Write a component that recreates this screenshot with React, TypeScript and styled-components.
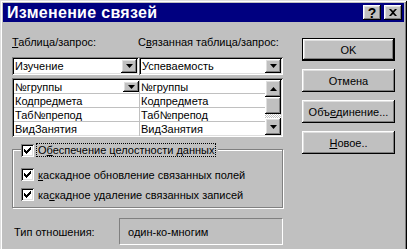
import * as React from 'react'
import styled, { createGlobalStyle, css } from 'styled-components'

const GlobalStyle = createGlobalStyle`
  html, body {
    margin: 0;
    padding: 0;
    background: #c0c0c0;
    overflow: hidden;
  }
  body {
    font-family: "Liberation Sans", Arial, sans-serif;
    font-size: 11px;
    color: #000;
  }
`

const raised = css`
  background: #c0c0c0;
  box-shadow: inset -1px -1px #000, inset 1px 1px #fff, inset -2px -2px #808080,
    inset 2px 2px #dfdfdf;
`

const sunken = css`
  background: #fff;
  box-shadow: inset 1px 1px #808080, inset -1px -1px #fff, inset 2px 2px #000,
    inset -2px -2px #dfdfdf;
`

// window runs past the bottom of the shot, so no bottom edge
const Window = styled.div`
  width: 407px;
  height: 249px;
  box-sizing: border-box;
  padding: 3px 3px 0;
  background: #c0c0c0;
  box-shadow: inset 1px 1px #dfdfdf, inset -1px 0 #000, inset 2px 2px #fff,
    inset -2px 0 #808080;
  overflow: hidden;
`

const TitleBar = styled.div`
  height: 19px;
  background: #000080;
  display: flex;
  align-items: center;
  padding: 0 2px 0 4px;
  color: #fff;
`

const Title = styled.div`
  flex: 1;
  font-weight: bold;
  font-size: 16px;
  letter-spacing: 0.3px;
  white-space: nowrap;
`

const CaptionButton = styled.div`
  ${raised};
  width: 18px;
  height: 15px;
  margin-left: 3px;
  display: flex;
  align-items: center;
  justify-content: center;
  color: #000;
  font-weight: bold;
  font-size: 14px;
  line-height: 1;
`

const Body = styled.div`
  display: flex;
  padding: 14px 0 0 9px;
`

const LeftPane = styled.div`
  width: 271px;
  display: flex;
  flex-direction: column;
`

const LabelRow = styled.div`
  display: grid;
  grid-template-columns: 126px 1fr;
  height: 13px;
  line-height: 13px;
  white-space: nowrap;
`

const ComboRow = styled.div`
  display: flex;
  margin-top: 8px;
`

const Combo = styled.div<{ $w: number }>`
  ${sunken};
  width: ${({ $w }) => $w}px;
  height: 18px;
  box-sizing: border-box;
  padding: 2px;
  display: flex;
  align-items: center;
`

const ComboText = styled.span`
  flex: 1;
  padding-left: 1px;
  white-space: nowrap;
  overflow: hidden;
`

const ArrowButton = styled.div<{ $h?: number }>`
  ${raised};
  width: 16px;
  height: ${({ $h }) => $h ?? 14}px;
  display: flex;
  align-items: center;
  justify-content: center;
  flex-shrink: 0;
`

const Grid = styled.div`
  ${sunken};
  margin-top: 3px;
  height: 59px;
  box-sizing: border-box;
  padding: 2px;
  display: flex;
`

const Table = styled.div`
  flex: 1;
  display: grid;
  grid-template-columns: 126px 1fr;
  grid-auto-rows: 14px;
`

const Cell = styled.div<{ $last?: boolean; $left?: boolean }>`
  height: 14px;
  box-sizing: border-box;
  border-bottom: ${({ $last }) => ($last ? 'none' : '1px solid #c0c0c0')};
  border-right: ${({ $left }) => ($left ? '1px solid #c0c0c0' : 'none')};
  padding-left: 1px;
  display: flex;
  align-items: center;
  white-space: nowrap;
`

const CellText = styled.span`
  flex: 1;
`

const ScrollBar = styled.div`
  width: 16px;
  display: flex;
  flex-direction: column;
`

const ScrollButton = styled.div<{ $h: number }>`
  ${raised};
  height: ${({ $h }) => $h}px;
  display: flex;
  align-items: center;
  justify-content: center;
  flex-shrink: 0;
`

const Track = styled.div`
  flex: 1;
  background: repeating-conic-gradient(#c0c0c0 0 25%, #fff 0 50%) 0 0 / 2px 2px;
`

const GroupBox = styled.div`
  position: relative;
  margin-top: 12px;
  border: 1px solid #808080;
  box-shadow: inset 1px 1px #fff, 1px 1px #fff;
  padding: 18px 0 6px 8px;
  display: flex;
  flex-direction: column;
  gap: 7px;
`

const Legend = styled.div`
  position: absolute;
  top: -7px;
  left: 8px;
  display: flex;
  align-items: center;
  background: #c0c0c0;
  padding-right: 2px;
`

const FocusLabel = styled.span`
  margin-left: 2px;
  padding: 0 1px;
  border: 1px dotted #000;
  height: 12px;
  line-height: 12px;
  white-space: nowrap;
`

const CheckRow = styled.div`
  display: flex;
  align-items: center;
  height: 13px;
  gap: 4px;
  white-space: nowrap;
`

const Box = styled.div`
  ${sunken};
  width: 13px;
  height: 13px;
  flex-shrink: 0;
  display: flex;
  align-items: center;
  justify-content: center;
`

const TypeRow = styled.div`
  display: flex;
  align-items: center;
  margin-top: 10px;
`

const TypeLabel = styled.div`
  width: 105px;
  padding-left: 2px;
`

const TypeField = styled.div`
  width: 164px;
  height: 27px;
  box-sizing: border-box;
  border: 1px solid;
  border-color: #808080 #fff #fff #808080;
  padding-left: 8px;
  display: flex;
  align-items: center;
`

const ButtonColumn = styled.div`
  margin-left: 19px;
  padding-top: 2px;
  display: flex;
  flex-direction: column;
  gap: 8px;
`

const PushButton = styled.div<{ $default?: boolean }>`
  width: 93px;
  height: 23px;
  box-sizing: border-box;
  display: flex;
  align-items: center;
  justify-content: center;
  background: #c0c0c0;
  ${({ $default }) =>
    $default
      ? css`
          border: 1px solid #000;
          box-shadow: inset -1px -1px #000, inset 1px 1px #fff,
            inset -2px -2px #808080, inset 2px 2px #dfdfdf;
        `
      : raised};
`

const U = styled.span`
  text-decoration: underline;
`

const Down = () => (
  <svg width="7" height="4" viewBox="0 0 7 4">
    <path d="M0 0h7L3.5 4z" fill="#000" />
  </svg>
)

const Up = () => (
  <svg width="7" height="4" viewBox="0 0 7 4">
    <path d="M0 4h7L3.5 0z" fill="#000" />
  </svg>
)

const Check = () => (
  <svg width="7" height="7" viewBox="0 0 7 7">
    <path d="M0 2h1v1h1v1h1V3h1V2h1V1h1V0h1v3H6v1H5v1H4v1H3v1H2V6H1V5H0z" fill="#000" />
  </svg>
)

const CloseX = () => (
  <svg width="8" height="7" viewBox="0 0 8 7">
    <path d="M0 0h2l2 2 2-2h2L5 3.5 8 7H6L4 5 2 7H0l3-3.5z" fill="#000" />
  </svg>
)

const fields = ['№группы', 'Кодпредмета', 'Таб№препод', 'ВидЗанятия']

const checks: React.ReactNode[] = [
  <>
    <U>к</U>аскадное обновление связанных полей
  </>,
  <>
    ка<U>с</U>кадное удаление связанных записей
  </>,
]

export default function App() {
  return (
    <>
      <GlobalStyle />
      <Window>
        <TitleBar>
          <Title>Изменение связей</Title>
          <CaptionButton>?</CaptionButton>
          <CaptionButton>
            <CloseX />
          </CaptionButton>
        </TitleBar>
        <Body>
          <LeftPane>
            <LabelRow>
              <span>
                <U>Т</U>аблица/запрос:
              </span>
              <span>
                С<U>в</U>язанная таблица/запрос:
              </span>
            </LabelRow>
            <ComboRow>
              <Combo $w={127}>
                <ComboText>Изучение</ComboText>
                <ArrowButton>
                  <Down />
                </ArrowButton>
              </Combo>
              <Combo $w={144}>
                <ComboText>Успеваемость</ComboText>
                <ArrowButton>
                  <Down />
                </ArrowButton>
              </Combo>
            </ComboRow>
            <Grid>
              <Table>
                {fields.map((f, i) => (
                  <React.Fragment key={f}>
                    <Cell $left $last={i === fields.length - 1}>
                      <CellText>{f}</CellText>
                      {i === 0 && (
                        <ArrowButton $h={11}>
                          <Down />
                        </ArrowButton>
                      )}
                    </Cell>
                    <Cell $last={i === fields.length - 1}>
                      <CellText>{f}</CellText>
                    </Cell>
                  </React.Fragment>
                ))}
              </Table>
              <ScrollBar>
                <ScrollButton $h={17}>
                  <Up />
                </ScrollButton>
                <ScrollButton $h={17} />
                <Track />
                <ScrollButton $h={17}>
                  <Down />
                </ScrollButton>
              </ScrollBar>
            </Grid>
            <GroupBox>
              <Legend>
                <Box>
                  <Check />
                </Box>
                <FocusLabel>
                  О<U>б</U>еспечение целостности данных
                </FocusLabel>
              </Legend>
              {checks.map((c, i) => (
                <CheckRow key={i}>
                  <Box>
                    <Check />
                  </Box>
                  <span>{c}</span>
                </CheckRow>
              ))}
            </GroupBox>
            <TypeRow>
              <TypeLabel>Тип отношения:</TypeLabel>
              <TypeField>один-ко-многим</TypeField>
            </TypeRow>
          </LeftPane>
          <ButtonColumn>
            <PushButton $default>OK</PushButton>
            <PushButton>Отмена</PushButton>
            <PushButton>
              Объ<U>е</U>динение...
            </PushButton>
            <PushButton>
              <U>Н</U>овое..
            </PushButton>
          </ButtonColumn>
        </Body>
      </Window>
    </>
  )
}
